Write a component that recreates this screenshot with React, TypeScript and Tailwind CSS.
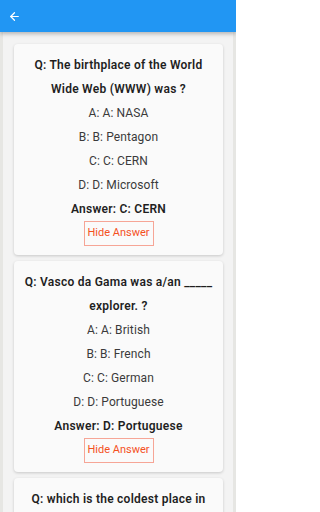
import { ArrowLeft } from "lucide-react";

type Quiz = {
  question: string;
  options: string[];
  answer: string;
};

const QUIZZES: Quiz[] = [
  {
    question: "Q: The birthplace of the World Wide Web (WWW) was ?",
    options: ["A: A: NASA", "B: B: Pentagon", "C: C: CERN", "D: D: Microsoft"],
    answer: "Answer: C: CERN",
  },
  {
    question: "Q: Vasco da Gama was a/an _____ explorer. ?",
    options: ["A: A: British", "B: B: French", "C: C: German", "D: D: Portuguese"],
    answer: "Answer: D: Portuguese",
  },
  {
    question: "Q: which is the coldest place in the world ?",
    options: ["A: A: Antarctica", "B: B: Siberia", "C: C: Greenland", "D: D: Alaska"],
    answer: "Answer: A: Antarctica",
  },
];

function QuizCard({ quiz }: { quiz: Quiz }) {
  return (
    <div className="shrink-0 bg-[#fafafa] rounded-[4px] shadow-[0_1px_3px_rgba(0,0,0,0.18)] px-2 py-[9px] flex flex-col items-center text-center">
      <p className="text-[12px] font-semibold leading-[24px] tracking-[0.25px] text-[#1f1f1f]">
        {quiz.question}
      </p>
      {quiz.options.map((o) => (
        <p key={o} className="text-[12px] leading-[24px] tracking-[0.1px] text-[#3a3a3a]">
          {o}
        </p>
      ))}
      <p className="text-[12px] font-semibold leading-[24px] tracking-[0.25px] text-[#1f1f1f]">
        {quiz.answer}
      </p>
      <button className="h-[25px] w-[70px] border border-[#f6a596] text-[11px] text-[#f4511e] flex items-center justify-center">
        Hide Answer
      </button>
    </div>
  );
}

export default function App() {
  return (
    <div
      className="w-[236px] h-[512px] overflow-hidden bg-[#e6e6e3] flex flex-col"
      style={{ fontFamily: "Roboto, 'Noto Sans', sans-serif" }}
    >
      <header className="relative z-10 h-[32px] shrink-0 bg-[#2196f3] shadow-[0_2px_4px_rgba(0,0,0,0.25)] flex items-center px-[8px]">
        <ArrowLeft className="h-[13px] w-[13px] text-white" strokeWidth={2.25} />
      </header>
      <main className="mx-[3px] flex-1 bg-[#f3f3f3] pt-[12px] pl-[11px] pr-[10px] flex flex-col gap-[6px] overflow-hidden">
        {QUIZZES.map((q) => (
          <QuizCard key={q.question} quiz={q} />
        ))}
      </main>
    </div>
  );
}
